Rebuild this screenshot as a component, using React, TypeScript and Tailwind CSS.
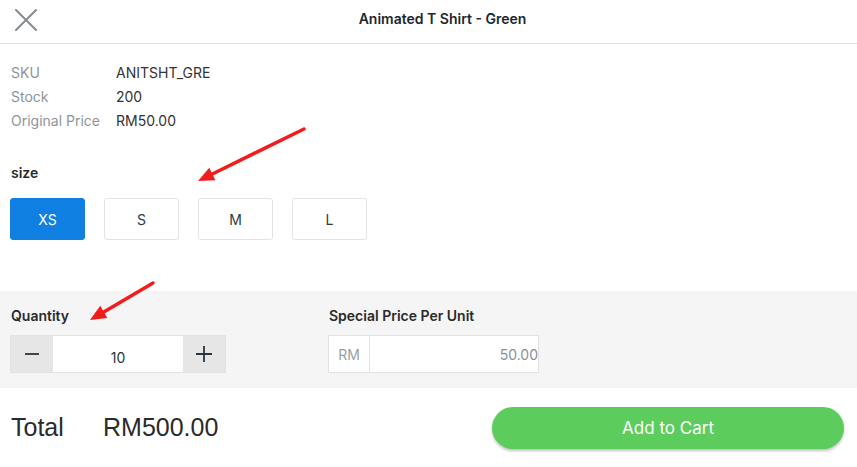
import { useState } from 'react'

const sizes = ['XS', 'S', 'M', 'L']

function Arrow({ x1, y1, x2, y2 }: { x1: number; y1: number; x2: number; y2: number }) {
  const ang = Math.atan2(y2 - y1, x2 - x1)
  const len = 16
  const w = 7
  const bx = x2 - Math.cos(ang) * len
  const by = y2 - Math.sin(ang) * len
  const px = -Math.sin(ang) * w
  const py = Math.cos(ang) * w
  return (
    <g>
      <line x1={x1} y1={y1} x2={bx} y2={by} stroke="#f21c1c" strokeWidth={3.5} strokeLinecap="round" />
      <polygon points={`${x2},${y2} ${bx + px},${by + py} ${bx - px},${by - py}`} fill="#f21c1c" />
    </g>
  )
}

export default function App() {
  const [size, setSize] = useState('XS')
  const [qty, setQty] = useState(10)

  return (
    <div className="relative w-[857px] h-[467px] bg-white overflow-hidden" style={{ fontFamily: 'Inter, "Liberation Sans", sans-serif' }}>
      {/* Header */}
      <div className="relative h-[44px] border-b border-[#e2e2e2] flex items-center justify-center pl-[28px]">
        <button className="absolute left-[13px] top-[8px] w-[26px] h-[24px] flex items-center justify-center">
          <svg width="24" height="24" viewBox="0 0 24 24">
            <path d="M2 2 L22 22 M22 2 L2 22" stroke="#868b91" strokeWidth="2" strokeLinecap="round" />
          </svg>
        </button>
        <h1 className="text-[14px] font-semibold text-[#1c2630] -mt-[6px]">Animated T Shirt - Green</h1>
      </div>

      {/* Info */}
      <div className="pl-[11px] pt-[17px] text-[14px] leading-[24px]">
        <div className="flex"><span className="w-[105px] text-[#8f949a]">SKU</span><span className="text-[#333]">ANITSHT_GRE</span></div>
        <div className="flex"><span className="w-[105px] text-[#8f949a]">Stock</span><span className="text-[#333]">200</span></div>
        <div className="flex"><span className="w-[105px] text-[#8f949a]">Original Price</span><span className="text-[#333]">RM50.00</span></div>
      </div>

      {/* Size */}
      <div className="pl-[10px] pt-[29px]">
        <div className="text-[14px] font-semibold text-[#2a2a2a] pl-[1px]">size</div>
        <div className="flex gap-[19px] mt-[15px]">
          {sizes.map(s => (
            <button
              key={s}
              onClick={() => setSize(s)}
              className={
                s === size
                  ? 'w-[75px] h-[42px] rounded-[3px] bg-[#0f7fe2] text-white text-[14px] border border-[#0f7fe2]'
                  : 'w-[75px] h-[42px] rounded-[3px] bg-white text-[#2e3a44] text-[14px] border border-[#e3e3e3]'
              }
            >
              {s}
            </button>
          ))}
        </div>
      </div>

      {/* Quantity & price */}
      <div className="mt-[51px] h-[97px] bg-[#f5f5f5] flex pl-[10px] pt-[14px]">
        <div className="w-[318px]">
          <div className="text-[14px] font-semibold text-[#2a2a2a] pl-[1px]">Quantity</div>
          <div className="flex mt-[9px] h-[38px] w-[216px] border border-[#e2e2e2]">
            <button onClick={() => setQty(q => Math.max(1, q - 1))} className="w-[42px] bg-[#e6e6e6] flex items-center justify-center">
              <svg width="16" height="16" viewBox="0 0 16 16"><path d="M1 8 H15" stroke="#2a3540" strokeWidth="1.8" /></svg>
            </button>
            <div className="flex-1 bg-white flex items-center justify-center pt-[6px] text-[14px] text-[#2a3540]">{qty}</div>
            <button onClick={() => setQty(q => q + 1)} className="w-[42px] bg-[#e6e6e6] flex items-center justify-center">
              <svg width="18" height="18" viewBox="0 0 18 18"><path d="M1 9 H17 M9 1 V17" stroke="#2a3540" strokeWidth="1.8" /></svg>
            </button>
          </div>
        </div>
        <div>
          <div className="text-[14px] font-semibold text-[#2a2a2a] pl-[1px]">Special Price Per Unit</div>
          <div className="flex mt-[9px] h-[38px] w-[211px] border border-[#e2e2e2] bg-white">
            <div className="w-[41px] border-r border-[#e2e2e2] flex items-center justify-center text-[14px] text-[#9a9fa5]">RM</div>
            <div className="flex-1 flex items-center justify-end text-[14px] text-[#8a8f95]">50.00</div>
          </div>
        </div>
      </div>

      {/* Footer */}
      <div className="flex items-center justify-between pl-[11px] pr-[13px] pt-[19px]">
        <div className="flex items-center text-[25px] text-[#2a2a2a]" style={{ fontFamily: '"Liberation Sans", Arial, sans-serif' }}>
          <span className="w-[92px]">Total</span>
          <span>RM500.00</span>
        </div>
        <button className="w-[352px] h-[42px] rounded-full bg-[#5ccd5c] text-white text-[17px] pt-[2px] shadow-[0_2px_3px_rgba(0,0,0,0.25)]">
          Add to Cart
        </button>
      </div>

      {/* annotation arrows */}
      <svg className="absolute inset-0 pointer-events-none" width="857" height="467">
        <Arrow x1={304} y1={129} x2={198} y2={181} />
        <Arrow x1={153} y1={283} x2={90} y2={320} />
      </svg>
    </div>
  )
}
